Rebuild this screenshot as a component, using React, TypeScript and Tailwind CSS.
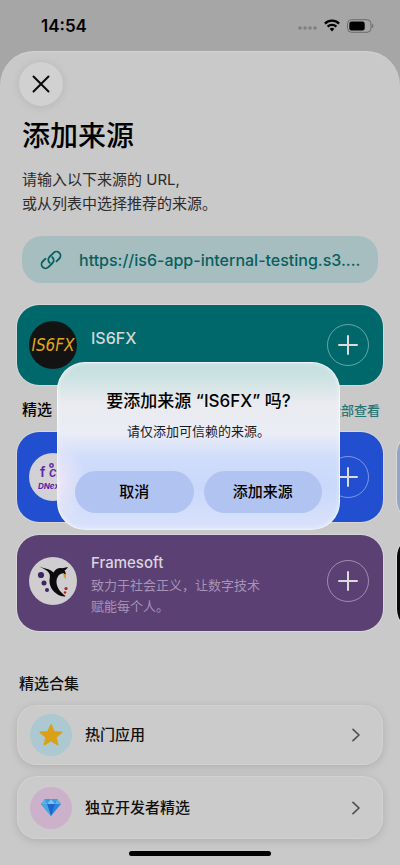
import type { ReactNode } from "react";

function StatusBar() {
  return (
    <header className="flex h-[51px] items-center justify-between pr-[26px] pl-[41px] text-black">
      <span className="text-[17px] leading-6 font-semibold">14:54</span>
      <div className="flex items-center gap-[7px]">
        <svg width="20" height="6" viewBox="0 0 20 6" className="mt-1" fill="#7f7f7f" aria-hidden="true">
          <circle cx="3" cy="3" r="1.8" />
          <circle cx="8" cy="3" r="1.8" />
          <circle cx="13" cy="3" r="1.8" />
          <circle cx="18" cy="3" r="1.8" />
        </svg>
        <svg width="16" height="13" viewBox="0 0 16 13" fill="none" stroke="#000" strokeWidth="2.2" aria-hidden="true">
          <path d="M0.9 4.6a10.2 10.2 0 0 1 14.2 0" />
          <path d="M3.6 7.6a6.3 6.3 0 0 1 8.8 0" />
          <path d="M5.6 9.8a3.5 3.5 0 0 1 4.8 0L8 12.4z" fill="#000" stroke="none" />
        </svg>
        <svg width="27" height="14" viewBox="0 0 27 14" aria-hidden="true">
          <rect x="0.5" y="0.7" width="23.5" height="12.6" rx="4" fill="none" stroke="#6c6c6c" />
          <rect x="2.3" y="2.5" width="15.4" height="9" rx="2.3" fill="#000" />
          <path d="M25.2 4.8c1.6.6 1.6 3.8 0 4.4z" fill="#6c6c6c" />
        </svg>
      </div>
    </header>
  );
}

function AddButton({ label }: { label: string }) {
  return (
    <button
      type="button"
      aria-label={label}
      className="grid size-[42px] shrink-0 place-items-center rounded-full border border-white/40"
    >
      <svg width="20" height="20" viewBox="0 0 20 20" stroke="#dedbdc" strokeWidth="2" strokeLinecap="round" aria-hidden="true">
        <path d="M10 1v18M1 10h18" />
      </svg>
    </button>
  );
}

function FramesoftLogo() {
  return (
    <svg width="48" height="48" viewBox="0 0 48 48" aria-hidden="true">
      <path
        d="M10 9C15 12 20 11 24.500 15.500C26.500 12 30 10.500 33 11.300L39 10C38 12 36.500 12.700 35.500 13.500C36.500 15 36.800 16 36.700 18L34.500 16.200C30.500 16 27.500 20 27.500 25C27.500 30 31 35 36.500 39C36 39.800 34 39.500 32 39C25 36.500 21 31 20.500 25C20.300 22 21.500 19.500 20.500 17C19 13 14 12 10 9Z"
        fill="#0b0b0d"
      />
      <path d="M34.300 16.500l2.400 1 .2 5-2-2.800z" fill="#d9962b" />
      <circle cx="12" cy="18" r="3.100" fill="#3c2560" />
      <circle cx="15" cy="26" r="2.500" fill="#3c2560" />
      <circle cx="18" cy="33" r="2" fill="#3c2560" />
      <circle cx="37" cy="31.500" r="1.600" fill="#b32020" />
      <circle cx="36" cy="35.500" r="1.200" fill="#b32020" />
    </svg>
  );
}

function SourceCard({ tone, logo, name, children }: { tone: string; logo: ReactNode; name: string; children?: ReactNode }) {
  return (
    <article className={`flex justify-between rounded-[22px] pr-[14px] pl-3 ring-1 ring-white/25 ${tone}`}>
      <div className="flex items-center gap-[14px]">
        {logo}
        {children}
      </div>
      <div className="flex items-center">
        <AddButton label={`添加 ${name}`} />
      </div>
    </article>
  );
}

function CollectionLink({ icon, label, size }: { icon: ReactNode; label: string; size: string }) {
  return (
    <a
      href="#"
      className={`flex items-center rounded-[20px] border border-white/15 bg-[#cbcbcb] pr-[21px] pl-3 shadow-[0_2px_8px_rgba(0,0,0,0.13)] ${size}`}
    >
      {icon}
      <span className="ml-[13px] flex-1 text-[15px] leading-6 font-medium text-[#101010]">{label}</span>
      <svg width="10" height="14" viewBox="0 0 10 14" fill="none" stroke="#505050" strokeWidth="1.7" strokeLinecap="round" strokeLinejoin="round" aria-hidden="true">
        <path d="M2 1.300L8 7l-6 5.700" />
      </svg>
    </a>
  );
}

function ConfirmDialog() {
  return (
    <div className="absolute inset-0 flex items-center justify-center pt-[27px] pr-[3px]">
      <section
        role="alertdialog"
        aria-labelledby="confirm-title"
        aria-describedby="confirm-text"
        className="w-[283px] rounded-[28px] border border-white/60 bg-[radial-gradient(ellipse_28px_48px_at_0_72%,rgba(238,232,246,0.95),transparent),linear-gradient(to_bottom,#c3dfde_0%,#cfe3e3_10%,#e9ebef_24%,#ebedf6_42%,#d0ddfb_56%,#c9d8fb_75%,#dae2fb_100%)] px-[17px] pt-[26px] pb-4 text-center text-black shadow-[inset_0_0_5px_rgba(255,255,255,0.5)]"
      >
        <h2 id="confirm-title" className="text-[17px] leading-6 font-medium">要添加来源 “IS6FX” 吗?</h2>
        <p id="confirm-text" className="mt-[6px] text-[13px] leading-6 text-[#1b1b1f]">请仅添加可信赖的来源。</p>
        <div className="mt-7 grid grid-cols-2 gap-[10px]">
          <button type="button" className="h-[42px] rounded-full bg-[#b1c3f1] text-[15px] font-medium">取消</button>
          <button type="button" className="h-[42px] rounded-full bg-[#b1c3f1] text-[15px] font-medium">添加来源</button>
        </div>
      </section>
    </div>
  );
}

export default function App() {
  return (
    <div className="relative min-h-screen overflow-hidden bg-[#a6a6a6] font-[Inter,'Noto_Sans_CJK_SC',sans-serif]">
      <StatusBar />
      <main className="rounded-t-[34px] border-t border-white/20 bg-[#c9c9c9] pt-[10px] pb-2">
        <button
          type="button"
          aria-label="关闭"
          className="ml-[19px] grid size-11 place-items-center rounded-full bg-[#d1d1d1] shadow-[0_1px_8px_rgba(0,0,0,0.1)]"
        >
          <svg width="18" height="18" viewBox="0 0 18 18" stroke="#0a0a0a" strokeWidth="2" strokeLinecap="round" aria-hidden="true">
            <path d="M1.500 1.500l15 15M16.500 1.500l-15 15" />
          </svg>
        </button>

        <div className="px-[22px]">
          <h1 className="mt-[10px] text-[28px] leading-10 font-medium text-black">添加来源</h1>
          <p className="mt-3 text-[15px] leading-6 text-[#2c2c2c]">
            请输入以下来源的 URL,
            <br />
            或从列表中选择推荐的来源。
          </p>
          <label className="mt-5 flex h-[47px] items-center gap-[17px] rounded-[20px] bg-[#a6bebf] pr-3 pl-[18px] text-[#07605f]">
            <svg width="22" height="22" viewBox="0 0 22 22" fill="none" stroke="currentColor" strokeWidth="1.800" strokeLinecap="round" aria-label="来源网址">
              <path d="M9.700 13.800a4 4 0 0 1-.3-5.800l4.200-4.200a4 4 0 0 1 5.700 5.700l-2.800 2.800" />
              <path d="M12.300 8.200a4 4 0 0 1 .3 5.800l-4.200 4.200a4 4 0 0 1-5.700-5.700l2.800-2.800" />
            </svg>
            <input
              readOnly
              type="text"
              value="https://is6-app-internal-testing.s3...."
              className="min-w-0 flex-1 bg-transparent text-[16px] leading-6 font-medium outline-none"
            />
          </label>
        </div>

        <div className="mt-[22px] px-[17px]">
          <SourceCard
            tone="bg-[#00686a] h-20"
            name="IS6FX"
            logo={
              <span className="grid size-12 place-items-center rounded-full bg-[#131313] font-['DejaVu_Sans_Condensed',sans-serif] text-[17px] leading-5 text-[#e0a51c] italic">
                IS6FX
              </span>
            }
          >
            <h3 className="mb-[14px] text-[16px] leading-6 font-medium text-[#d3d9d9]">IS6FX</h3>
          </SourceCard>
        </div>

        <section>
          <div className="mt-[13px] flex items-center justify-between pr-5 pl-[22px] leading-6">
            <h2 className="text-[15px] font-medium text-black">精选</h2>
            <a href="#" className="text-[13px] font-medium text-[#277673]">全部查看</a>
          </div>
          <div className="mt-[9px] grid grid-cols-[calc(100%_-_17px)_calc(100%_-_17px)] gap-x-[14px] gap-y-[13px] overflow-hidden py-px pl-[17px]">
            <SourceCard
              tone="bg-[#214fd0] h-[90px]"
              name="fdroid"
              logo={
                <span className="grid size-12 place-items-center rounded-full bg-[#d2d2d6]">
                  <svg width="48" height="48" viewBox="0 0 48 48" fill="none" aria-hidden="true">
                    <text x="11" y="24" fontSize="14" fontWeight="600" fill="#5c2aa8">f</text>
                    <text x="20" y="24" fontSize="13" fontWeight="600" fontStyle="italic" fill="#5c2aa8">ch</text>
                    <circle cx="22.500" cy="12.500" r="1.700" stroke="#5c2aa8" strokeWidth="1.500" />
                    <text x="9" y="36" fontSize="8" fontWeight="700" fontStyle="italic" fill="#5420a4">DNext</text>
                  </svg>
                </span>
              }
            />
            <div className="rounded-[22px] bg-[#94a3c9] ring-1 ring-white/30" />
            <SourceCard
              tone="bg-[#5b4074] h-24 pb-1"
              name="Framesoft"
              logo={
                <span className="grid size-12 place-items-center rounded-full bg-[#cfcdd0]">
                  <FramesoftLogo />
                </span>
              }
            >
              <div className="pt-[6px]">
                <h3 className="text-[15px] leading-6 font-medium text-[#dad5de]">Framesoft</h3>
                <p className="text-[13px] leading-[21px] text-[#a793b6]">
                  致力于社会正义，让数字技术
                  <br />
                  赋能每个人。
                </p>
              </div>
            </SourceCard>
            <div className="rounded-[22px] bg-[#0a0a0a] ring-1 ring-white/30" />
          </div>
        </section>

        <section className="px-[17px]">
          <h2 className="mt-10 ml-[2px] text-[15px] leading-6 font-medium text-[#101010]">精选合集</h2>
          <div className="mt-[9px] flex flex-col gap-[11px]">
            <CollectionLink
              size="h-[60px]"
              label="热门应用"
              icon={
                <span className="grid size-[42px] place-items-center rounded-full bg-[#acc8d0]">
                  <svg width="24" height="24" viewBox="0 0 24 24" fill="#dca016" stroke="#dca016" strokeWidth="1.500" strokeLinejoin="round" aria-hidden="true">
                    <path d="M12 1.800l3 6.900 7.700.6-5.900 4.900 1.900 7.500-6.700-4.100-6.700 4.100 1.900-7.500-5.900-4.900 7.700-.6z" />
                  </svg>
                </span>
              }
            />
            <CollectionLink
              size="h-[63px]"
              label="独立开发者精选"
              icon={
                <span className="grid size-[42px] place-items-center rounded-full bg-[#cbb1ca]">
                  <svg width="20" height="17" viewBox="0 0 20 17" aria-hidden="true">
                    <path d="M4 0h12l4 5-10 12L0 5z" fill="#2a86d8" />
                    <path d="M4 0l2 5H0zM16 0l4 5h-6z" fill="#58b4e8" />
                    <path d="M4 0h6L6 5zM16 0h-6l4 5z" fill="#3b9ae0" />
                    <path d="M10 0l4 5H6z" fill="#74c6ef" />
                    <path d="M6 5h8l-4 12z" fill="#1f66cc" />
                    <path d="M0 5h6l4 12z" fill="#48a8e4" />
                  </svg>
                </span>
              }
            />
          </div>
        </section>
        <div className="mx-auto mt-3 mb-px h-[5px] w-[142px] rounded-full bg-black" />
      </main>
      <ConfirmDialog />
    </div>
  );
}
